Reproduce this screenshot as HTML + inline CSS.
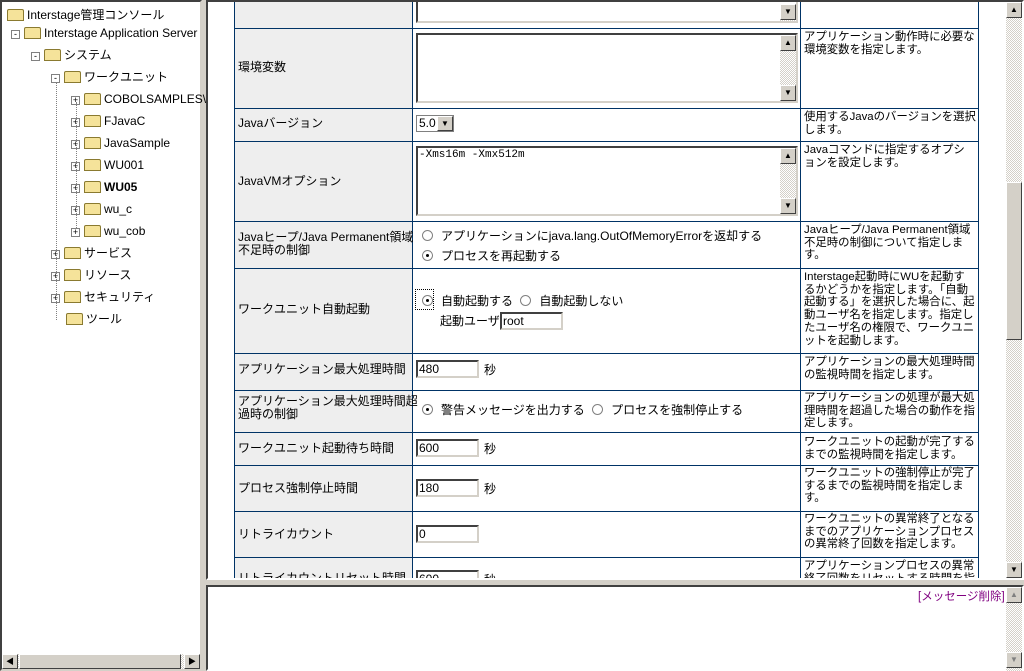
<!DOCTYPE html><html><head><meta charset="utf-8"><style>
*{box-sizing:border-box}
body{margin:0;width:1024px;height:671px;background:#d4d0c8;font-family:"Liberation Sans","Noto Sans CJK JP",sans-serif;font-size:12px;color:#000;position:relative;overflow:hidden}
.a{position:absolute}
.left{left:0;top:0;width:202px;height:671px;background:#fff;border:2px solid;border-color:#404040 #d4d0c8 #d4d0c8 #404040}
.tree div{position:absolute;white-space:nowrap;font-size:12px;line-height:14px}
.fold{display:inline-block;width:17px;height:12px;background:#f5e39a;border:1px solid #8a7a30;vertical-align:-2px;margin-right:3px;border-radius:2px 2px 0 0}
.pm{display:inline-block;width:9px;height:9px;border:1px solid #808080;font-size:9px;line-height:7px;text-align:center;margin-right:4px;vertical-align:0;background:#fff}
.dv{position:absolute;border-left:1px dotted #808080}
.frame{left:206px;top:0;width:818px;height:580px;background:#fff;border:2px solid;border-color:#404040 #fff #fff #404040;overflow:hidden}
.vl{position:absolute;background:#003366;width:1px}
.hl{position:absolute;background:#003366;height:1px;left:234px;width:745px}
.lab{position:absolute;left:235px;width:177px;background:#eee}
.t{position:absolute;white-space:nowrap;line-height:13px}
.inp{position:absolute;background:#fff;border:2px solid;border-color:#404040 #d4d0c8 #d4d0c8 #404040;font-size:12px;line-height:14px;padding-left:1px}
.ta{position:absolute;background:#fff;border:2px solid;border-color:#404040 #d4d0c8 #d4d0c8 #404040}
.sb{position:absolute;background:repeating-conic-gradient(#fff 0 25%,#d4d0c8 0 50%) 0 0/2px 2px}
.btn{position:absolute;width:16px;height:16px;background:#d4d0c8;border:1px solid;border-color:#fff #404040 #404040 #fff;font-size:8px;line-height:14px;text-align:center;color:#000}
.rd{display:inline-block;width:11px;height:11px;border-radius:50%;border:1px solid #808080;background:#fff;vertical-align:-1px;margin-right:8px;position:relative}
.rd.on:after{content:"";position:absolute;left:3px;top:3px;width:3px;height:3px;border-radius:50%;background:#000}
.d{position:absolute;left:804px;width:172px;line-height:12.7px;font-size:11.4px}
</style></head><body>
<div class="a left">
 <div class="tree">
  <div style="left:5px;top:6px"><span class="fold"></span>Interstage管理コンソール</div>
  <div style="left:9px;top:24px"><span class="pm">-</span><span class="fold"></span>Interstage Application Server</div>
  <div style="left:29px;top:46px"><span class="pm">-</span><span class="fold"></span>システム</div>
  <div style="left:49px;top:68px"><span class="pm">-</span><span class="fold"></span>ワークユニット</div>
  <div style="left:69px;top:90px"><span class="pm">+</span><span class="fold"></span>COBOLSAMPLES\</div>
  <div style="left:69px;top:112px"><span class="pm">+</span><span class="fold"></span>FJavaC</div>
  <div style="left:69px;top:134px"><span class="pm">+</span><span class="fold"></span>JavaSample</div>
  <div style="left:69px;top:156px"><span class="pm">+</span><span class="fold"></span>WU001</div>
  <div style="left:69px;top:178px;font-weight:bold"><span class="pm" style="font-weight:normal">+</span><span class="fold"></span>WU05</div>
  <div style="left:69px;top:200px"><span class="pm">+</span><span class="fold"></span>wu_c</div>
  <div style="left:69px;top:222px"><span class="pm">+</span><span class="fold"></span>wu_cob</div>
  <div style="left:49px;top:244px"><span class="pm">+</span><span class="fold"></span>サービス</div>
  <div style="left:49px;top:266px"><span class="pm">+</span><span class="fold"></span>リソース</div>
  <div style="left:49px;top:288px"><span class="pm">+</span><span class="fold"></span>セキュリティ</div>
  <div style="left:64px;top:310px"><span class="fold"></span>ツール</div>
 </div>
 <div class="dv" style="left:54px;top:80px;height:238px"></div>
 <div class="dv" style="left:74px;top:100px;height:126px"></div>
 <div class="sb" style="left:0;top:652px;width:198px;height:15px"></div>
 <div class="btn" style="left:0;top:652px;height:15px">◀</div>
 <div class="a" style="left:17px;top:652px;width:162px;height:15px;background:#d4d0c8;border:1px solid;border-color:#fff #404040 #404040 #fff"></div>
 <div class="btn" style="left:182px;top:652px;height:15px">▶</div>
</div>

<div class="a frame"></div>
<div class="a" style="left:208px;top:2px;width:798px;height:576px;overflow:hidden">
<div class="a" style="left:-208px;top:-2px;width:1024px;height:600px">
 <div class="lab" style="top:0;height:28px"></div>
 <div class="lab" style="top:29px;height:79px"></div>
 <div class="lab" style="top:109px;height:32px"></div>
 <div class="lab" style="top:142px;height:79px"></div>
 <div class="lab" style="top:222px;height:46px"></div>
 <div class="lab" style="top:269px;height:84px"></div>
 <div class="lab" style="top:354px;height:36px"></div>
 <div class="lab" style="top:391px;height:41px"></div>
 <div class="lab" style="top:433px;height:32px"></div>
 <div class="lab" style="top:466px;height:45px"></div>
 <div class="lab" style="top:512px;height:45px"></div>
 <div class="lab" style="top:558px;height:45px"></div>
 <div class="vl" style="left:234px;top:0;height:600px"></div>
 <div class="vl" style="left:412px;top:0;height:600px"></div>
 <div class="vl" style="left:800px;top:0;height:600px"></div>
 <div class="vl" style="left:978px;top:0;height:600px"></div>
 <div class="hl" style="top:28px"></div><div class="hl" style="top:108px"></div><div class="hl" style="top:141px"></div><div class="hl" style="top:221px"></div><div class="hl" style="top:268px"></div><div class="hl" style="top:353px"></div><div class="hl" style="top:390px"></div><div class="hl" style="top:432px"></div><div class="hl" style="top:465px"></div><div class="hl" style="top:511px"></div><div class="hl" style="top:557px"></div>

 <div class="ta" style="left:416px;top:-10px;width:382px;height:33px"></div>
 <div class="sb" style="left:780px;top:4px;width:16px;height:17px"></div><div class="btn" style="left:780px;top:4px">▼</div>
 <div class="t" style="left:238px;top:61px">環境変数</div>
 <div class="ta" style="left:416px;top:33px;width:382px;height:70px"></div>
 <div class="sb" style="left:780px;top:35px;width:16px;height:66px"></div><div class="btn" style="left:780px;top:35px">▲</div><div class="btn" style="left:780px;top:85px">▼</div>
 <div class="d" style="top:31px">アプリケーション動作時に必要な環境変数を指定します。</div>

 <div class="t" style="left:238px;top:117px">Javaバージョン</div>
 <div class="a" style="left:416px;top:115px;width:38px;height:17px;border:1px solid #808080;background:#fff;font-size:12px;line-height:15px;padding-left:2px">5.0</div>
 <div class="btn" style="left:437px;top:116px;height:15px;width:16px">▼</div>
 <div class="d" style="top:111px">使用するJavaのバージョンを選択します。</div>

 <div class="t" style="left:238px;top:175px">JavaVMオプション</div>
 <div class="ta" style="left:416px;top:146px;width:382px;height:70px;font-family:'Liberation Mono',monospace;font-size:11px;line-height:13px;padding:1px">-Xms16m -Xmx512m</div>
 <div class="sb" style="left:780px;top:148px;width:16px;height:66px"></div><div class="btn" style="left:780px;top:148px">▲</div><div class="btn" style="left:780px;top:198px">▼</div>
 <div class="d" style="top:144px">Javaコマンドに指定するオプションを設定します。</div>

 <div class="t" style="left:238px;top:231px;line-height:13px">Javaヒープ/Java Permanent領域<br>不足時の制御</div>
 <div class="t" style="left:422px;top:230px"><span class="rd"></span>アプリケーションにjava.lang.OutOfMemoryErrorを返却する</div>
 <div class="t" style="left:422px;top:250px"><span class="rd on"></span>プロセスを再起動する</div>
 <div class="d" style="top:224px">Javaヒープ/Java Permanent領域不足時の制御について指定します。</div>

 <div class="t" style="left:238px;top:303px">ワークユニット自動起動</div>
 <div class="a" style="left:415px;top:289px;width:19px;height:21px;border:1px dotted #000"></div>
 <div class="t" style="left:422px;top:295px"><span class="rd on"></span>自動起動する <span class="rd" style="margin-left:4px"></span>自動起動しない</div>
 <div class="t" style="left:440px;top:315px">起動ユーザ</div>
 <div class="inp" style="left:500px;top:312px;width:63px;height:18px">root</div>
 <div class="d" style="top:271px">Interstage起動時にWUを起動するかどうかを指定します。「自動起動する」を選択した場合に、起動ユーザ名を指定します。指定したユーザ名の権限で、ワークユニットを起動します。</div>

 <div class="t" style="left:238px;top:363px">アプリケーション最大処理時間</div>
 <div class="inp" style="left:416px;top:360px;width:63px;height:18px">480</div><div class="t" style="left:484px;top:364px">秒</div>
 <div class="d" style="top:356px">アプリケーションの最大処理時間の監視時間を指定します。</div>

 <div class="t" style="left:238px;top:395px">アプリケーション最大処理時間超<br>過時の制御</div>
 <div class="t" style="left:422px;top:404px"><span class="rd on"></span>警告メッセージを出力する <span class="rd" style="margin-left:4px"></span>プロセスを強制停止する</div>
 <div class="d" style="top:392px">アプリケーションの処理が最大処理時間を超過した場合の動作を指定します。</div>

 <div class="t" style="left:238px;top:442px">ワークユニット起動待ち時間</div>
 <div class="inp" style="left:416px;top:439px;width:63px;height:18px">600</div><div class="t" style="left:484px;top:443px">秒</div>
 <div class="d" style="top:436px">ワークユニットの起動が完了するまでの監視時間を指定します。</div>

 <div class="t" style="left:238px;top:482px">プロセス強制停止時間</div>
 <div class="inp" style="left:416px;top:479px;width:63px;height:18px">180</div><div class="t" style="left:484px;top:483px">秒</div>
 <div class="d" style="top:467px">ワークユニットの強制停止が完了するまでの監視時間を指定します。</div>

 <div class="t" style="left:238px;top:528px">リトライカウント</div>
 <div class="inp" style="left:416px;top:525px;width:63px;height:18px">0</div>
 <div class="d" style="top:513px">ワークユニットの異常終了となるまでのアプリケーションプロセスの異常終了回数を指定します。</div>

 <div class="t" style="left:238px;top:572px">リトライカウントリセット時間</div>
 <div class="inp" style="left:416px;top:570px;width:63px;height:18px">600</div><div class="t" style="left:484px;top:574px">秒</div>
 <div class="d" style="top:560px">アプリケーションプロセスの異常終了回数をリセットする時間を指定します。</div>
</div></div>
<div class="sb" style="left:1006px;top:2px;width:16px;height:576px"></div>
<div class="btn" style="left:1006px;top:2px">▲</div>
<div class="a" style="left:1006px;top:182px;width:16px;height:158px;background:#d4d0c8;border:1px solid;border-color:#fff #404040 #404040 #fff"></div>
<div class="btn" style="left:1006px;top:562px">▼</div>

<div class="a" style="left:206px;top:585px;width:818px;height:86px;background:#fff;border:2px solid;border-color:#404040 #fff #fff #404040"></div>
<div class="t" style="left:918px;top:591px;color:#800080;font-size:11.5px">[メッセージ削除]</div>
<div class="sb" style="left:1006px;top:587px;width:16px;height:84px"></div>
<div class="btn" style="left:1006px;top:587px;color:#808080">▲</div>
<div class="btn" style="left:1006px;top:652px;color:#808080">▼</div>
</body></html>
